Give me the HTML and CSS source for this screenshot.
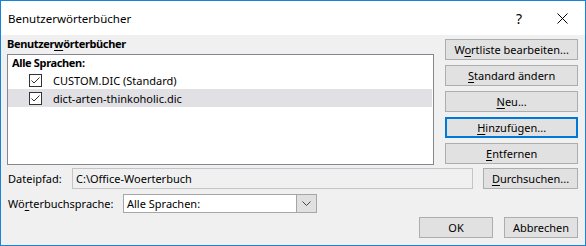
FILE: index.html
```html
<!DOCTYPE html>
<html lang="de">

<head>
  <meta charset="UTF-8">
  <title>Benutzerwörterbücher</title>
  <link rel="stylesheet" href="styles.css">
</head>

<body>
  <div class="dialog">
    <header class="titlebar">
      <span class="title">Benutzerwörterbücher</span>
      <span class="help">?</span>
      <span class="close">
        <svg width="11" height="11" viewBox="0 0 11 11"><path d="M0.5 0.5 L10.5 10.5 M10.5 0.5 L0.5 10.5" stroke="#000" stroke-width="1" fill="none"/></svg>
      </span>
    </header>

    <main class="content">
      <div class="top">
        <section class="dicts">
          <div class="group-label">Benutzer<u>w</u>örterbücher</div>
          <div class="listbox">
            <div class="list-head">Alle Sprachen:</div>
            <div class="list-row">
              <span class="check"><svg width="13" height="13" viewBox="0 0 13 13"><rect x="0.5" y="0.5" width="12" height="12" fill="#fff" stroke="#333"/><path d="M2.5 6.5 L5 9 L10.5 3.5" stroke="#333" fill="none"/></svg></span>
              CUSTOM.DIC (Standard)
            </div>
            <div class="list-row selected">
              <span class="check"><svg width="13" height="13" viewBox="0 0 13 13"><rect x="0.5" y="0.5" width="12" height="12" fill="#fff" stroke="#333"/><path d="M2.5 6.5 L5 9 L10.5 3.5" stroke="#333" fill="none"/></svg></span>
              dict-arten-thinkoholic.dic
            </div>
          </div>
        </section>

        <nav class="actions">
          <button class="btn">W<u>o</u>rtliste bearbeiten...</button>
          <button class="btn"><u>S</u>tandard ändern</button>
          <button class="btn"><u>N</u>eu...</button>
          <button class="btn focused"><u>H</u>inzufügen...</button>
          <button class="btn"><u>E</u>ntfernen</button>
        </nav>
      </div>

      <div class="path-row">
        <span class="label">Dateipfad:</span>
        <div class="path-field">C:\Office-Woerterbuch</div>
        <button class="btn browse"><u>D</u>urchsuchen...</button>
      </div>

      <div class="lang-row">
        <span class="label">Wö<u>r</u>terbuchsprache:</span>
        <div class="select">
          <span class="select-value">Alle Sprachen:</span>
          <span class="select-arrow"><svg width="9" height="5" viewBox="0 0 9 5"><path d="M0.5 0.5 L4.5 4.5 L8.5 0.5" stroke="#444" fill="none"/></svg></span>
        </div>
      </div>

      <div class="footer">
        <button class="btn small">OK</button>
        <button class="btn small">Abbrechen</button>
      </div>
    </main>
  </div>
</body>

</html>
```

FILE: styles.css
```css
* {
  box-sizing: border-box;
}

body {
  margin: 0;
  font-family: 'Noto Sans', sans-serif;
  font-size: 11px;
  color: #000;
}

u {
  text-underline-offset: 2px;
}

.dialog {
  width: 586px;
  height: 246px;
  border: 1px solid #1883d7;
  background-color: #f0f0f0;
  display: flex;
  flex-direction: column;
}

.titlebar {
  height: 34px;
  flex-shrink: 0;
  background-color: #fff;
  display: flex;
  align-items: center;
  padding: 0 17px 0 7px;
}

.title {
  flex: 1;
  font-size: 11.5px;
}

.help {
  font-size: 14px;
  width: 42px;
  padding-left: 1px;
}

.close {
  display: flex;
  padding-top: 1px;
}

.content {
  flex: 1;
  padding: 1px 7px 0 6px;
}

.top {
  display: flex;
  gap: 11px;
}

.dicts {
  width: 428px;
}

.group-label {
  font-weight: bold;
  letter-spacing: -0.35px;
  height: 18px;
  line-height: 16px;
}

.listbox {
  height: 111px;
  background-color: #fff;
  border: 1px solid #828790;
}

.list-head {
  font-weight: bold;
  letter-spacing: -0.35px;
  height: 16px;
  line-height: 16px;
  padding-left: 4px;
}

.list-row {
  height: 18px;
  display: flex;
  align-items: center;
  padding-left: 21px;
  margin-right: 1px;
}

.list-row.selected {
  background-color: #e0e0e5;
}

.check {
  display: flex;
  width: 24px;
}

.actions {
  width: 133px;
  margin-top: 3px;
  display: flex;
  flex-direction: column;
  gap: 5px;
}

.btn {
  height: 21px;
  background-color: #e1e1e1;
  border: 1px solid #adadad;
  font-family: inherit;
  font-size: 11px;
  color: #000;
  padding: 0;
}

.btn.focused {
  border: 2px solid #0078d7;
}

.path-row {
  display: flex;
  align-items: center;
  margin-top: 3px;
  padding-left: 1px;
}

.label {
  width: 64px;
}

.path-field {
  width: 401px;
  height: 21px;
  border: 1px solid #c4c4c4;
  background-color: #f0f0f0;
  line-height: 19px;
  padding-left: 3px;
}

.btn.browse {
  width: 95px;
  margin-left: 10px;
}

.lang-row {
  display: flex;
  align-items: center;
  margin-top: 5px;
  padding-left: 1px;
}

.lang-row .label {
  width: 115px;
}

.select {
  width: 194px;
  height: 19px;
  border: 1px solid #a6a6a6;
  background-color: #fff;
  display: flex;
}

.select-value {
  flex: 1;
  line-height: 17px;
  padding-left: 3px;
}

.select-arrow {
  width: 20px;
  background-color: #e0e0e0;
  border-left: 1px solid #a6a6a6;
  display: flex;
  align-items: center;
  justify-content: center;
}

.footer {
  display: flex;
  justify-content: flex-end;
  gap: 11px;
  margin-top: 4px;
}

.btn.small {
  width: 74px;
}
```
